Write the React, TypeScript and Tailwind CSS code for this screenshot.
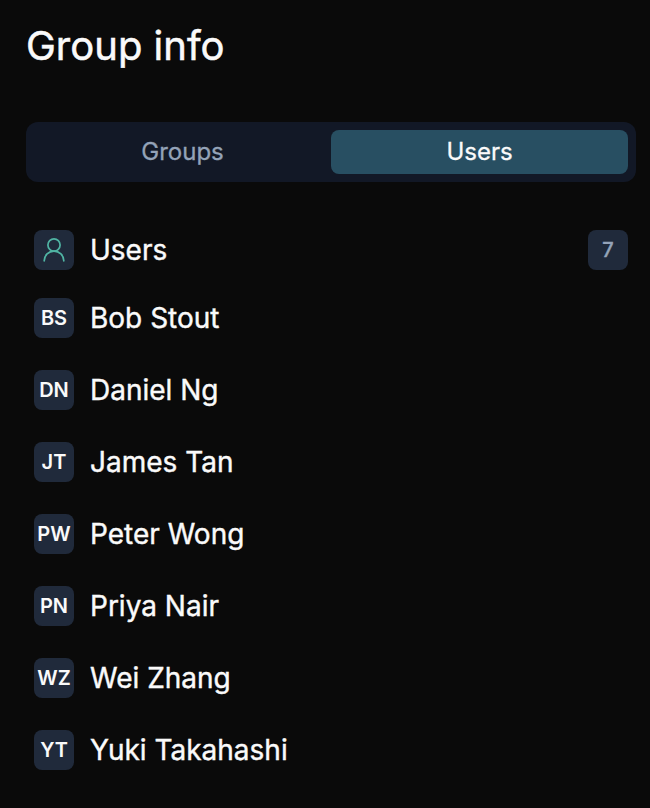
const users = [
  { initials: "BS", name: "Bob Stout" },
  { initials: "DN", name: "Daniel Ng" },
  { initials: "JT", name: "James Tan" },
  { initials: "PW", name: "Peter Wong" },
  { initials: "PN", name: "Priya Nair" },
  { initials: "WZ", name: "Wei Zhang" },
  { initials: "YT", name: "Yuki Takahashi" },
];

function UserIcon() {
  return (
    <svg
      width="24"
      height="24"
      viewBox="0 0 24 24"
      fill="none"
      stroke="#50b5a4"
      strokeWidth="1.7"
      strokeLinecap="round"
      strokeLinejoin="round"
    >
      <circle cx="12" cy="7" r="6.100" />
      <path d="M2.200 22.800a9.800 9.700 0 0 1 19.600 0" />
    </svg>
  );
}

export default function App() {
  return (
    <main className="h-[808px] w-[650px] overflow-hidden bg-[#0a0a0a] pl-[26px] pr-[14px] pt-[22px] font-['Inter',sans-serif] text-[#fafafa]">
      <h1 className="h-12 text-[40px] leading-[48px] [-webkit-text-stroke:0.5px]">Group info</h1>
      <div className="mt-[52px] flex h-[60px] rounded-xl bg-[#121826] p-2 text-2xl [-webkit-text-stroke:0.3px]">
        <button className="flex flex-1 items-center justify-center text-[#94a3b8]">Groups</button>
        <button className="flex flex-1 items-center justify-center rounded-lg bg-[#284f62]">Users</button>
      </div>
      <section className="mt-12 px-2">
        <header className="flex h-10 items-center gap-4">
          <span className="flex size-10 items-center justify-center rounded-lg bg-[#202a3b]">
            <UserIcon />
          </span>
          <h2 className="flex-1 text-[28px] leading-10 [-webkit-text-stroke:0.4px]">Users</h2>
          <span className="flex size-10 items-center justify-center rounded-lg bg-[#202a3b] text-xl font-medium text-[#94a3b8] [-webkit-text-stroke:0.4px]">7</span>
        </header>
        <ul className="mt-7 flex flex-col gap-8">
          {users.map((user) => (
            <li key={user.name} className="flex h-10 items-center gap-4">
              <span className="flex size-10 items-center justify-center rounded-lg bg-[#202a3b] text-xl font-semibold">{user.initials}</span>
              <span className="text-[28px] leading-10 [-webkit-text-stroke:0.4px]">{user.name}</span>
            </li>
          ))}
        </ul>
      </section>
    </main>
  );
}
